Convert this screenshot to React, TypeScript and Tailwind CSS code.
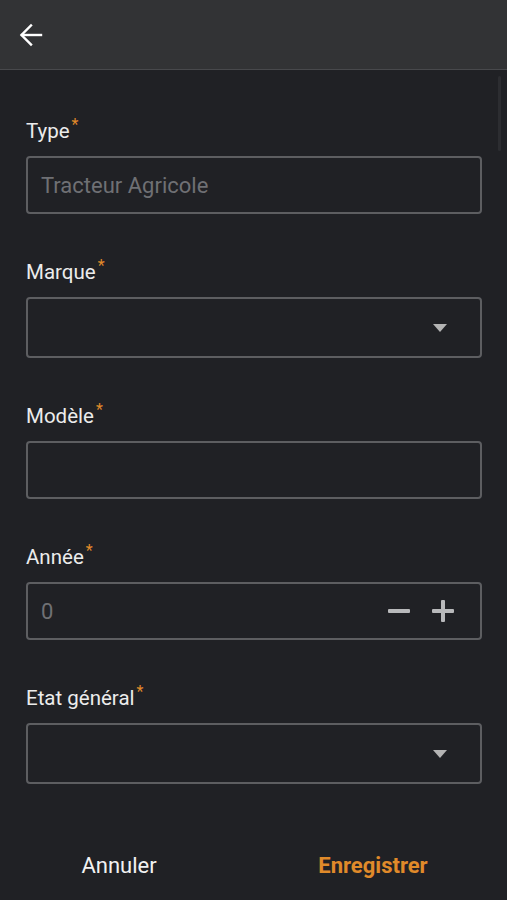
function Label({ text }: { text: string }) {
  return (
    <div className="flex items-start h-[26px] text-[20.5px] leading-[26px] text-[#ececec]">
      <span>{text}</span>
      <span className="text-[#e08a2a] text-[16px] leading-[16px] ml-[2px] mt-[-1px]">*</span>
    </div>
  )
}

function Caret() {
  return (
    <svg width="16" height="8" viewBox="0 0 16 8" className="mr-[32px]">
      <path d="M1 0 L15 0 L8 8 Z" fill="#b4b4b4" />
    </svg>
  )
}

function Box({ children, h = 'h-[58px]' }: { children?: React.ReactNode; h?: string }) {
  return (
    <div className={`${h} mt-[12px] rounded-[4px] border-2 border-[#5d5e61] flex items-center pl-[13px]`}>
      {children}
    </div>
  )
}

export default function App() {
  return (
    <div className="w-[507px] h-[900px] bg-[#202125] flex flex-col overflow-hidden" style={{ fontFamily: 'Roboto, "Liberation Sans", sans-serif' }}>
      {/* Header */}
      <div className="h-[70px] shrink-0 bg-[#323335] border-b border-[#48494c] flex items-center pl-[19px]">
        <svg width="24" height="24" viewBox="0 0 24 24" fill="none" stroke="white" strokeWidth="2.4" strokeLinecap="square">
          <path d="M3 12 H22" />
          <path d="M12 2.5 L2.5 12 L12 21.5" strokeLinejoin="miter" />
        </svg>
      </div>

      <div className="flex flex-1 relative">
        <div className="flex-1 px-[26px] pt-[48px] flex flex-col gap-[45px] pr-[25px]">
          <div>
            <Label text="Type" />
            <Box>
              <span className="text-[22px] text-[#6f7074]">Tracteur Agricole</span>
            </Box>
          </div>
          <div>
            <Label text="Marque" />
            <Box h="h-[61px]">
              <div className="flex-1" />
              <Caret />
            </Box>
          </div>
          <div>
            <Label text="Modèle" />
            <Box />
          </div>
          <div>
            <Label text="Année" />
            <Box>
              <span className="text-[22px] text-[#6f7074] flex-1">0</span>
              <div className="flex items-center gap-[22px] mr-[26px]">
                <svg width="22" height="22" viewBox="0 0 22 22">
                  <rect x="0" y="9" width="22" height="4" rx="1" fill="#b8b9bb" />
                </svg>
                <svg width="22" height="22" viewBox="0 0 22 22">
                  <rect x="0" y="9" width="22" height="4" rx="1" fill="#b8b9bb" />
                  <rect x="9" y="0" width="4" height="22" rx="1" fill="#b8b9bb" />
                </svg>
              </div>
            </Box>
          </div>
          <div>
            <Label text="Etat général" />
            <Box h="h-[61px]">
              <div className="flex-1" />
              <Caret />
            </Box>
          </div>
        </div>
        <div className="absolute right-[6px] top-[6px] w-[3px] h-[75px] rounded-full bg-[#2c2d31]" />
      </div>

      {/* Footer */}
      <div className="h-[72px] shrink-0 flex items-center pt-[2px]">
        <div className="w-[238px] text-center text-[22px] text-[#f2f2f2]">Annuler</div>
        <div className="w-[268px] text-center text-[22px] font-bold text-[#e08a2a] pl-[2px]">Enregistrer</div>
      </div>
    </div>
  )
}
